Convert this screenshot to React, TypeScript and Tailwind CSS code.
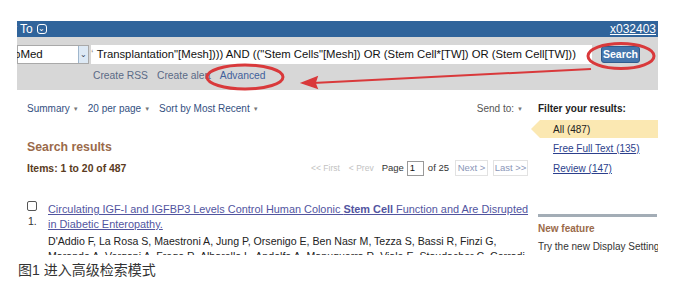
import React from "react";

const FONT = { fontFamily: '"Liberation Sans", Arial, "Noto Sans CJK SC", sans-serif' };

function Caret() {
  return <span className="ml-[3px] inline-block align-middle text-[6px] text-[#777]">▼</span>;
}

function Annotations() {
  // red hand-drawn marks over the screenshot (frame coords)
  return (
    <svg className="pointer-events-none absolute left-0 top-0" width="641" height="234">
      <ellipse cx="604" cy="35" rx="33" ry="12.5" fill="none" stroke="#d9393b" strokeWidth="3" />
      <ellipse cx="228" cy="56" rx="38" ry="12" fill="none" stroke="#d9393b" strokeWidth="3" />
      <line x1="574" y1="48" x2="296" y2="62" stroke="#d9393b" strokeWidth="2" />
      <path d="M285 62 L300 56 L298 62 L300 67 Z" fill="#d9393b" stroke="#d9393b" strokeWidth="1.5" />
    </svg>
  );
}

export default function App() {
  return (
    <div className="h-[295px] w-[689px] overflow-hidden bg-white" style={FONT}>
      <div className="relative ml-[17px] mt-[21px] h-[234px] w-[641px] overflow-hidden bg-white">
        {/* top bar */}
        <div className="flex h-[16px] items-center justify-between bg-[#30649b] pr-[2px] text-[12px] leading-[14px] text-white">
          <div className="flex items-center">
            <span className="ml-[-4px]">r To</span>
            <span className="ml-[4px] flex h-[10px] w-[10px] items-center justify-center rounded-[3px] border border-white text-[8px] leading-none">⌄</span>
          </div>
          <span className="underline">x032403</span>
        </div>

        {/* search band */}
        <div className="h-[53px] bg-[#d7d7d7]">
          <div className="flex items-center pt-[8px]">
            <div className="flex h-[19px] w-[72px] items-center border border-[#a9a9a9] bg-white">
              <span className="ml-[-4px] flex-1 text-[11.5px] text-[#111]">bMed</span>
              <span className="flex h-full w-[10px] items-center justify-center border-l border-[#9fb6cc] bg-[#dde9f5] text-[8px] text-[#345]">⌄</span>
            </div>
            <div className="ml-[2px] flex h-[19px] w-[501px] items-center overflow-hidden whitespace-nowrap bg-white text-[11.3px] text-[#111]">
              <span className="text-[#999]">ʻ</span>&nbsp;Transplantation"[Mesh]))) AND (("Stem Cells"[Mesh]) OR (Stem Cell*[TW]) OR (Stem Cell[TW]))
            </div>
            <button className="ml-[9px] h-[17px] w-[39px] rounded-[3px] border border-[#2f5b8d] bg-[#4576ad] text-[10.5px] font-bold leading-none text-white">
              Search
            </button>
          </div>
          <div className="mt-[5px] flex gap-[9px] pl-[76px] text-[10.3px] leading-[13px] text-[#5a6a86]">
            <span>Create RSS</span>
            <span>Create alert</span>
            <span className="text-[#3f5f9c]">Advanced</span>
          </div>
        </div>

        {/* results page */}
        <div className="flex gap-[8px] pl-[10px]">
          <div className="w-[503px] shrink-0">
            <div className="mt-[12px] flex items-center justify-between pr-[7px] text-[10px] leading-[13px] text-[#34507f]">
              <div className="flex gap-[9px]">
                <span>Summary<Caret /></span>
                <span>20 per page<Caret /></span>
                <span>Sort by Most Recent<Caret /></span>
              </div>
              <span className="text-[#555]">Send to:<Caret /></span>
            </div>
            <div className="mt-[24px] text-[12.3px] font-bold leading-[15px] text-[#9a6a4a]">Search results</div>
            <div className="mt-[5px] flex h-[17px] items-center justify-between pr-[2px]">
              <span className="text-[10.4px] font-bold text-[#5a3b22]">Items: 1 to 20 of 487</span>
              <div className="flex items-center text-[8.5px] text-[#c2c2c2]">
                <span>&lt;&lt; First</span>
                <span className="ml-[9px]">&lt; Prev</span>
                <span className="ml-[8px] text-[9.5px] text-[#333]">Page</span>
                <span className="ml-[3px] flex h-[15px] w-[17px] items-center border border-[#999] pl-[2px] text-[9.5px] text-[#111]">1</span>
                <span className="ml-[4px] text-[9.5px] text-[#333]">of 25</span>
                <span className="ml-[6px] flex h-[16px] w-[33px] items-center justify-center border border-[#e2e2e2] text-[9.5px] text-[#8a96b8]">Next &gt;</span>
                <span className="ml-[5px] flex h-[16px] w-[35px] items-center justify-center border border-[#e2e2e2] text-[9.5px] text-[#8a96b8]">Last &gt;&gt;</span>
              </div>
            </div>
            <div className="mt-[25px] flex">
              <div className="flex w-[21px] shrink-0 flex-col">
                <span className="mt-[-1px] h-[10px] w-[10px] rounded-[2px] border border-[#555] bg-white" />
                <span className="mt-[4px] pl-[1px] text-[10.5px] leading-[13px] text-[#333]">1.</span>
              </div>
              <div className="flex-1">
                <div className="text-[10.9px] leading-[15px] text-[#52559f] underline">
                  Circulating IGF-I and IGFBP3 Levels Control Human Colonic <b>Stem Cell</b> Function and Are Disrupted in Diabetic Enteropathy.
                </div>
                <div className="mt-[2px] text-[10.6px] leading-[15px] text-[#222]">
                  D'Addio F, La Rosa S, Maestroni A, Jung P, Orsenigo E, Ben Nasr M, Tezza S, Bassi R, Finzi G, Marando A, Vergani A, Frego R, Albarello L, Andolfo A, Manuguerra R, Viale E, Staudacher C, Corradi
                </div>
              </div>
            </div>
          </div>

          <div className="min-w-0 flex-1 text-[10px] leading-[13px]">
            <div className="mt-[12px] font-bold text-[#222]">Filter your results:</div>
            <div className="relative ml-[2px] mt-[5px] flex h-[18px] items-center bg-[#fbe8b2] pl-[13px] text-[#222]">
              <span className="absolute left-[-9px] top-0 h-0 w-0 border-y-[9px] border-r-[9px] border-y-transparent border-r-[#fbe8b2]" />
              All (487)
            </div>
            <div className="mt-[4px] pl-[15px] text-[#2c3f8c] underline">Free Full Text (135)</div>
            <div className="mt-[7px] pl-[15px] text-[#2c3f8c] underline">Review (147)</div>
            <div className="mt-[39px] h-[3px] w-[119px] bg-[#a3adb6]" />
            <div className="mt-[5px] font-bold text-[#9a6a4a]">New feature</div>
            <div className="mt-[4px] whitespace-nowrap leading-[15px] text-[#333]">
              Try the new Display Setting
              <br />
              option - Sort by Relevance
            </div>
          </div>
        </div>

        <Annotations />
      </div>
      <div className="ml-[18px] mt-[7px] text-[14px] leading-[16px] text-[#333]" style={FONT}>图1 进入高级检索模式</div>
    </div>
  );
}
